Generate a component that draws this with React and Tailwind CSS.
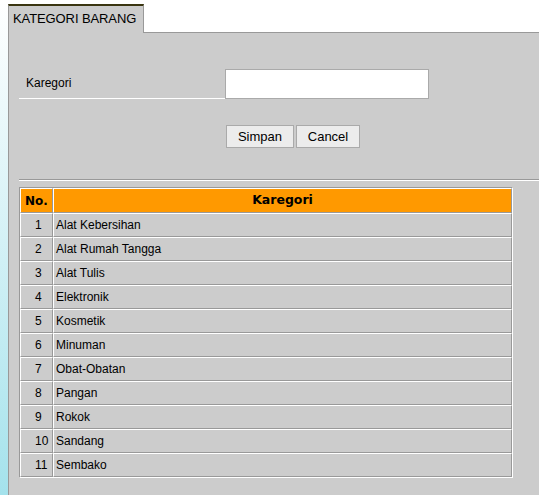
// Kategori Barang — form + list of categories.
import React from "react";

const KATEGORI = [
  "Alat Kebersihan",
  "Alat Rumah Tangga",
  "Alat Tulis",
  "Elektronik",
  "Kosmetik",
  "Minuman",
  "Obat-Obatan",
  "Pangan",
  "Rokok",
  "Sandang",
  "Sembako",
];

const SANS = "font-['Liberation_Sans',Arial,sans-serif]";
const BOLD = "font-['DejaVu_Sans',Verdana,sans-serif] font-bold";

export default function App() {
  return (
    <div className={`flex w-[539px] h-[495px] overflow-hidden bg-white text-black ${SANS}`}>
      {/* left gradient strip */}
      <div className="w-[8px] shrink-0 bg-gradient-to-b from-white to-[#a4e2ec]" />

      <div className="flex flex-1 flex-col">
        {/* tab bar */}
        <div className="flex pt-[4px] bg-white">
          <div className="w-[136px] h-[29px] shrink-0 border-t-2 border-t-[#3a3510] border-l border-r border-[#999] bg-[#cccccc] pl-[4px] text-[13px] leading-[26px] tracking-[-0.1px]">
            KATEGORI BARANG
          </div>
          <div className="flex-1 border-b border-[#999]" />
        </div>

        {/* panel */}
        <div className="flex-1 bg-[#cccccc] border-l border-[#999]">
          <div className="flex items-end mt-[35px] ml-[10px]">
            <div className="w-[206px] h-[31px] border-b border-white flex items-center pl-[7px] text-[12px]">
              Karegori
            </div>
            <input
              type="text"
              className="w-[204px] h-[30px] border border-[#aaa] bg-white outline-none"
            />
          </div>

          <div className="flex gap-[2px] ml-[217px] mt-[26px]">
            <button className="w-[68px] h-[23px] border border-[#aaa] bg-[#ececec] text-[13px] pt-[1px]">
              Simpan
            </button>
            <button className="w-[64px] h-[23px] border border-[#aaa] bg-[#ececec] text-[13px] pt-[1px]">
              Cancel
            </button>
          </div>

          <div className="ml-[10px] mt-[31px] border-t border-t-[#999] border-b border-b-white" />

          <table className="ml-[10px] mt-[6px] w-[494px] border-separate border-spacing-0 border-t border-l border-[#999] border-r border-b border-r-white border-b-white">
            <thead>
              <tr>
                <th className={`w-[33px] h-[25px] p-0 bg-[#ff9900] border-t border-l border-white border-r border-b border-r-[#999] border-b-[#999] text-[12px] ${BOLD}`}>
                  No.
                </th>
                <th className={`h-[25px] p-0 bg-[#ff9900] border-t border-l border-white border-r border-b border-r-[#999] border-b-[#999] text-[12.5px] ${BOLD}`}>
                  Karegori
                </th>
              </tr>
            </thead>
            <tbody>
              {KATEGORI.map((k, i) => (
                <tr key={k}>
                  <td className="h-[24px] p-0 pl-[14px] text-left text-[12px] border-t border-l border-white border-r border-b border-r-[#999] border-b-[#999]">
                    {i + 1}
                  </td>
                  <td className="h-[24px] p-0 pl-[2px] text-left text-[12px] border-t border-l border-white border-r border-b border-r-[#999] border-b-[#999]">
                    {k}
                  </td>
                </tr>
              ))}
            </tbody>
          </table>
        </div>
      </div>
    </div>
  );
}
